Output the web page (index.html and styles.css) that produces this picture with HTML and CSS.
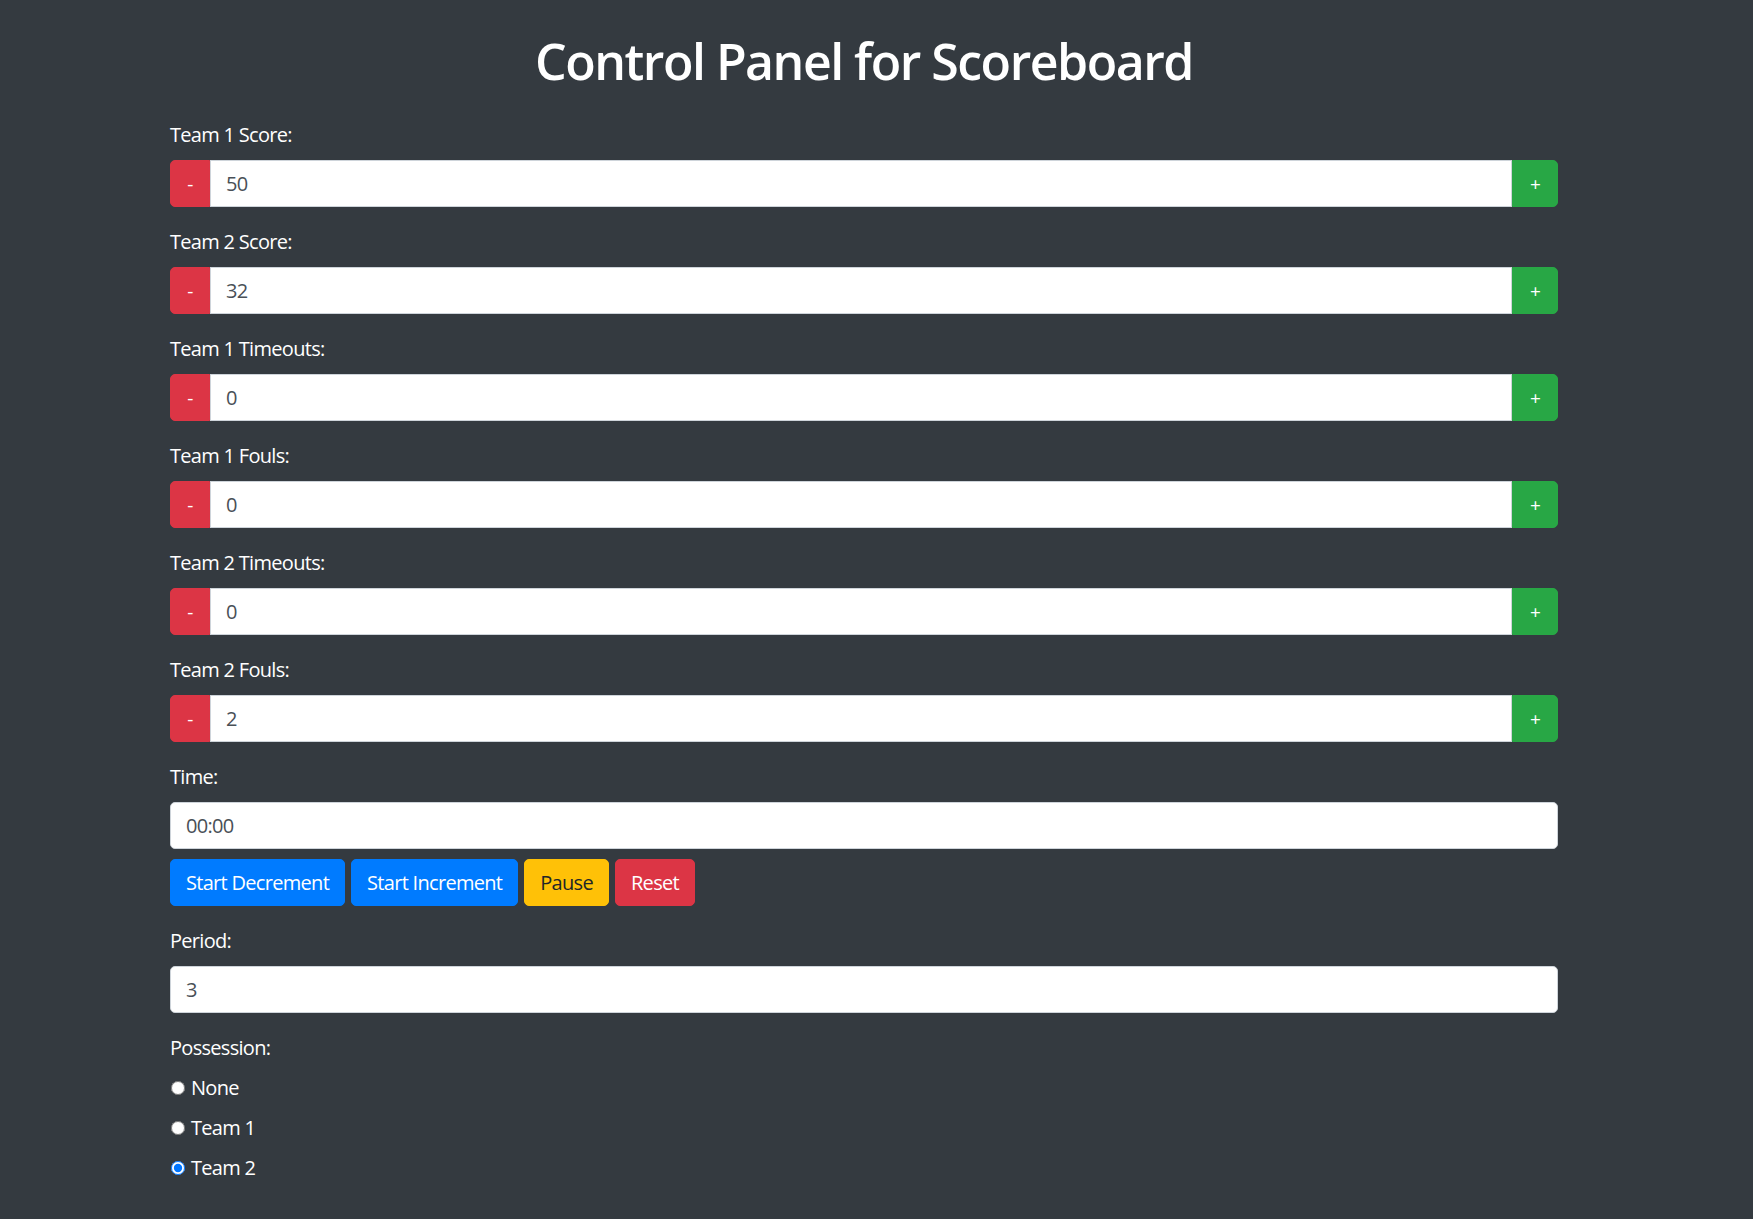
FILE: index.html
```html
<!DOCTYPE html>
<html lang="en">
<head>
<meta charset="utf-8">
<title>Control Panel for Scoreboard</title>
<link rel="stylesheet" href="styles.css">
</head>
<body>
<div class="container">
  <h1 class="title">Control Panel for Scoreboard</h1>

  <div class="form-group">
    <label class="field-label">Team 1 Score:</label>
    <div class="input-group">
      <button class="btn btn-minus">-</button>
      <input class="form-control" type="text" value="50">
      <button class="btn btn-plus">+</button>
    </div>
  </div>

  <div class="form-group">
    <label class="field-label">Team 2 Score:</label>
    <div class="input-group">
      <button class="btn btn-minus">-</button>
      <input class="form-control" type="text" value="32">
      <button class="btn btn-plus">+</button>
    </div>
  </div>

  <div class="form-group">
    <label class="field-label">Team 1 Timeouts:</label>
    <div class="input-group">
      <button class="btn btn-minus">-</button>
      <input class="form-control" type="text" value="0">
      <button class="btn btn-plus">+</button>
    </div>
  </div>

  <div class="form-group">
    <label class="field-label">Team 1 Fouls:</label>
    <div class="input-group">
      <button class="btn btn-minus">-</button>
      <input class="form-control" type="text" value="0">
      <button class="btn btn-plus">+</button>
    </div>
  </div>

  <div class="form-group">
    <label class="field-label">Team 2 Timeouts:</label>
    <div class="input-group">
      <button class="btn btn-minus">-</button>
      <input class="form-control" type="text" value="0">
      <button class="btn btn-plus">+</button>
    </div>
  </div>

  <div class="form-group">
    <label class="field-label">Team 2 Fouls:</label>
    <div class="input-group">
      <button class="btn btn-minus">-</button>
      <input class="form-control" type="text" value="2">
      <button class="btn btn-plus">+</button>
    </div>
  </div>

  <div class="form-group">
    <label class="field-label">Time:</label>
    <input class="form-control standalone" type="text" value="00:00">
    <div class="btn-row">
      <button class="btn btn-action btn-primary">Start Decrement</button>
      <button class="btn btn-action btn-primary">Start Increment</button>
      <button class="btn btn-action btn-warning">Pause</button>
      <button class="btn btn-action btn-danger">Reset</button>
    </div>
  </div>

  <div class="form-group">
    <label class="field-label">Period:</label>
    <input class="form-control standalone" type="text" value="3">
  </div>

  <div class="form-group">
    <label class="field-label">Possession:</label>
    <div class="radio-list">
      <label class="form-check"><input type="radio" name="possession" class="radio"> None</label>
      <label class="form-check"><input type="radio" name="possession" class="radio"> Team 1</label>
      <label class="form-check"><input type="radio" name="possession" class="radio" checked> Team 2</label>
    </div>
  </div>
</div>
</body>
</html>
```
FILE: styles.css
```css
html, body {
  margin: 0;
  padding: 0;
}

body {
  background: #343a40;
  color: #ffffff;
  font-family: "Open Sans", "Noto Sans", "Liberation Sans", sans-serif;
  font-size: 20px;
  line-height: 30px;
  letter-spacing: -0.7px;
  min-height: 1219px;
}

.container {
  width: 1388px;
  margin-left: 170px;
  padding-top: 31px;
}

.title {
  margin: 0 0 29px;
  font-size: 50px;
  line-height: 60px;
  font-weight: 600;
  text-align: center;
  letter-spacing: -1.5px;
}

.form-group {
  margin-bottom: 20px;
}

.field-label {
  display: block;
  margin-bottom: 10px;
  font-size: 20px;
  line-height: 30px;
}

.input-group {
  display: flex;
  height: 47px;
}

.btn {
  font-family: inherit;
  letter-spacing: inherit;
  border: 1px solid transparent;
  color: #ffffff;
  cursor: pointer;
  margin: 0;
}

.btn-minus {
  width: 40px;
  background: #dc3545;
  border-color: #dc3545;
  border-radius: 5px 0 0 5px;
  font-size: 19px;
  padding: 0;
}

.btn-plus {
  width: 46px;
  background: #28a745;
  border-color: #28a745;
  border-radius: 0 5px 5px 0;
  font-size: 19px;
  padding: 0;
}

.form-control {
  flex: 1;
  box-sizing: border-box;
  height: 47px;
  margin: 0;
  padding: 0 15px;
  border: 1px solid #ced4da;
  background: #ffffff;
  color: #495057;
  font-family: inherit;
  letter-spacing: inherit;
  font-size: 20px;
}

.input-group .form-control {
  border-radius: 0;
  min-width: 0;
}

.form-control.standalone {
  display: block;
  width: 100%;
  border-radius: 5px;
}

.btn-row {
  display: flex;
  gap: 6px;
  margin-top: 10px;
}

.btn-action {
  height: 47px;
  padding: 0 15px;
  border-radius: 5px;
  font-size: 20px;
}

.btn-primary {
  background: #007bff;
  border-color: #007bff;
}

.btn-warning {
  background: #ffc107;
  border-color: #ffc107;
  color: #212529;
}

.btn-danger {
  background: #dc3545;
  border-color: #dc3545;
}

.radio-list {
  display: flex;
  flex-direction: column;
  gap: 10px;
}

.form-check {
  display: flex;
  align-items: center;
  gap: 6px;
  height: 30px;
  line-height: 30px;
}

.radio {
  width: 14px;
  height: 14px;
  margin: 0 0 0 1px;
  accent-color: #0075ff;
}
```
